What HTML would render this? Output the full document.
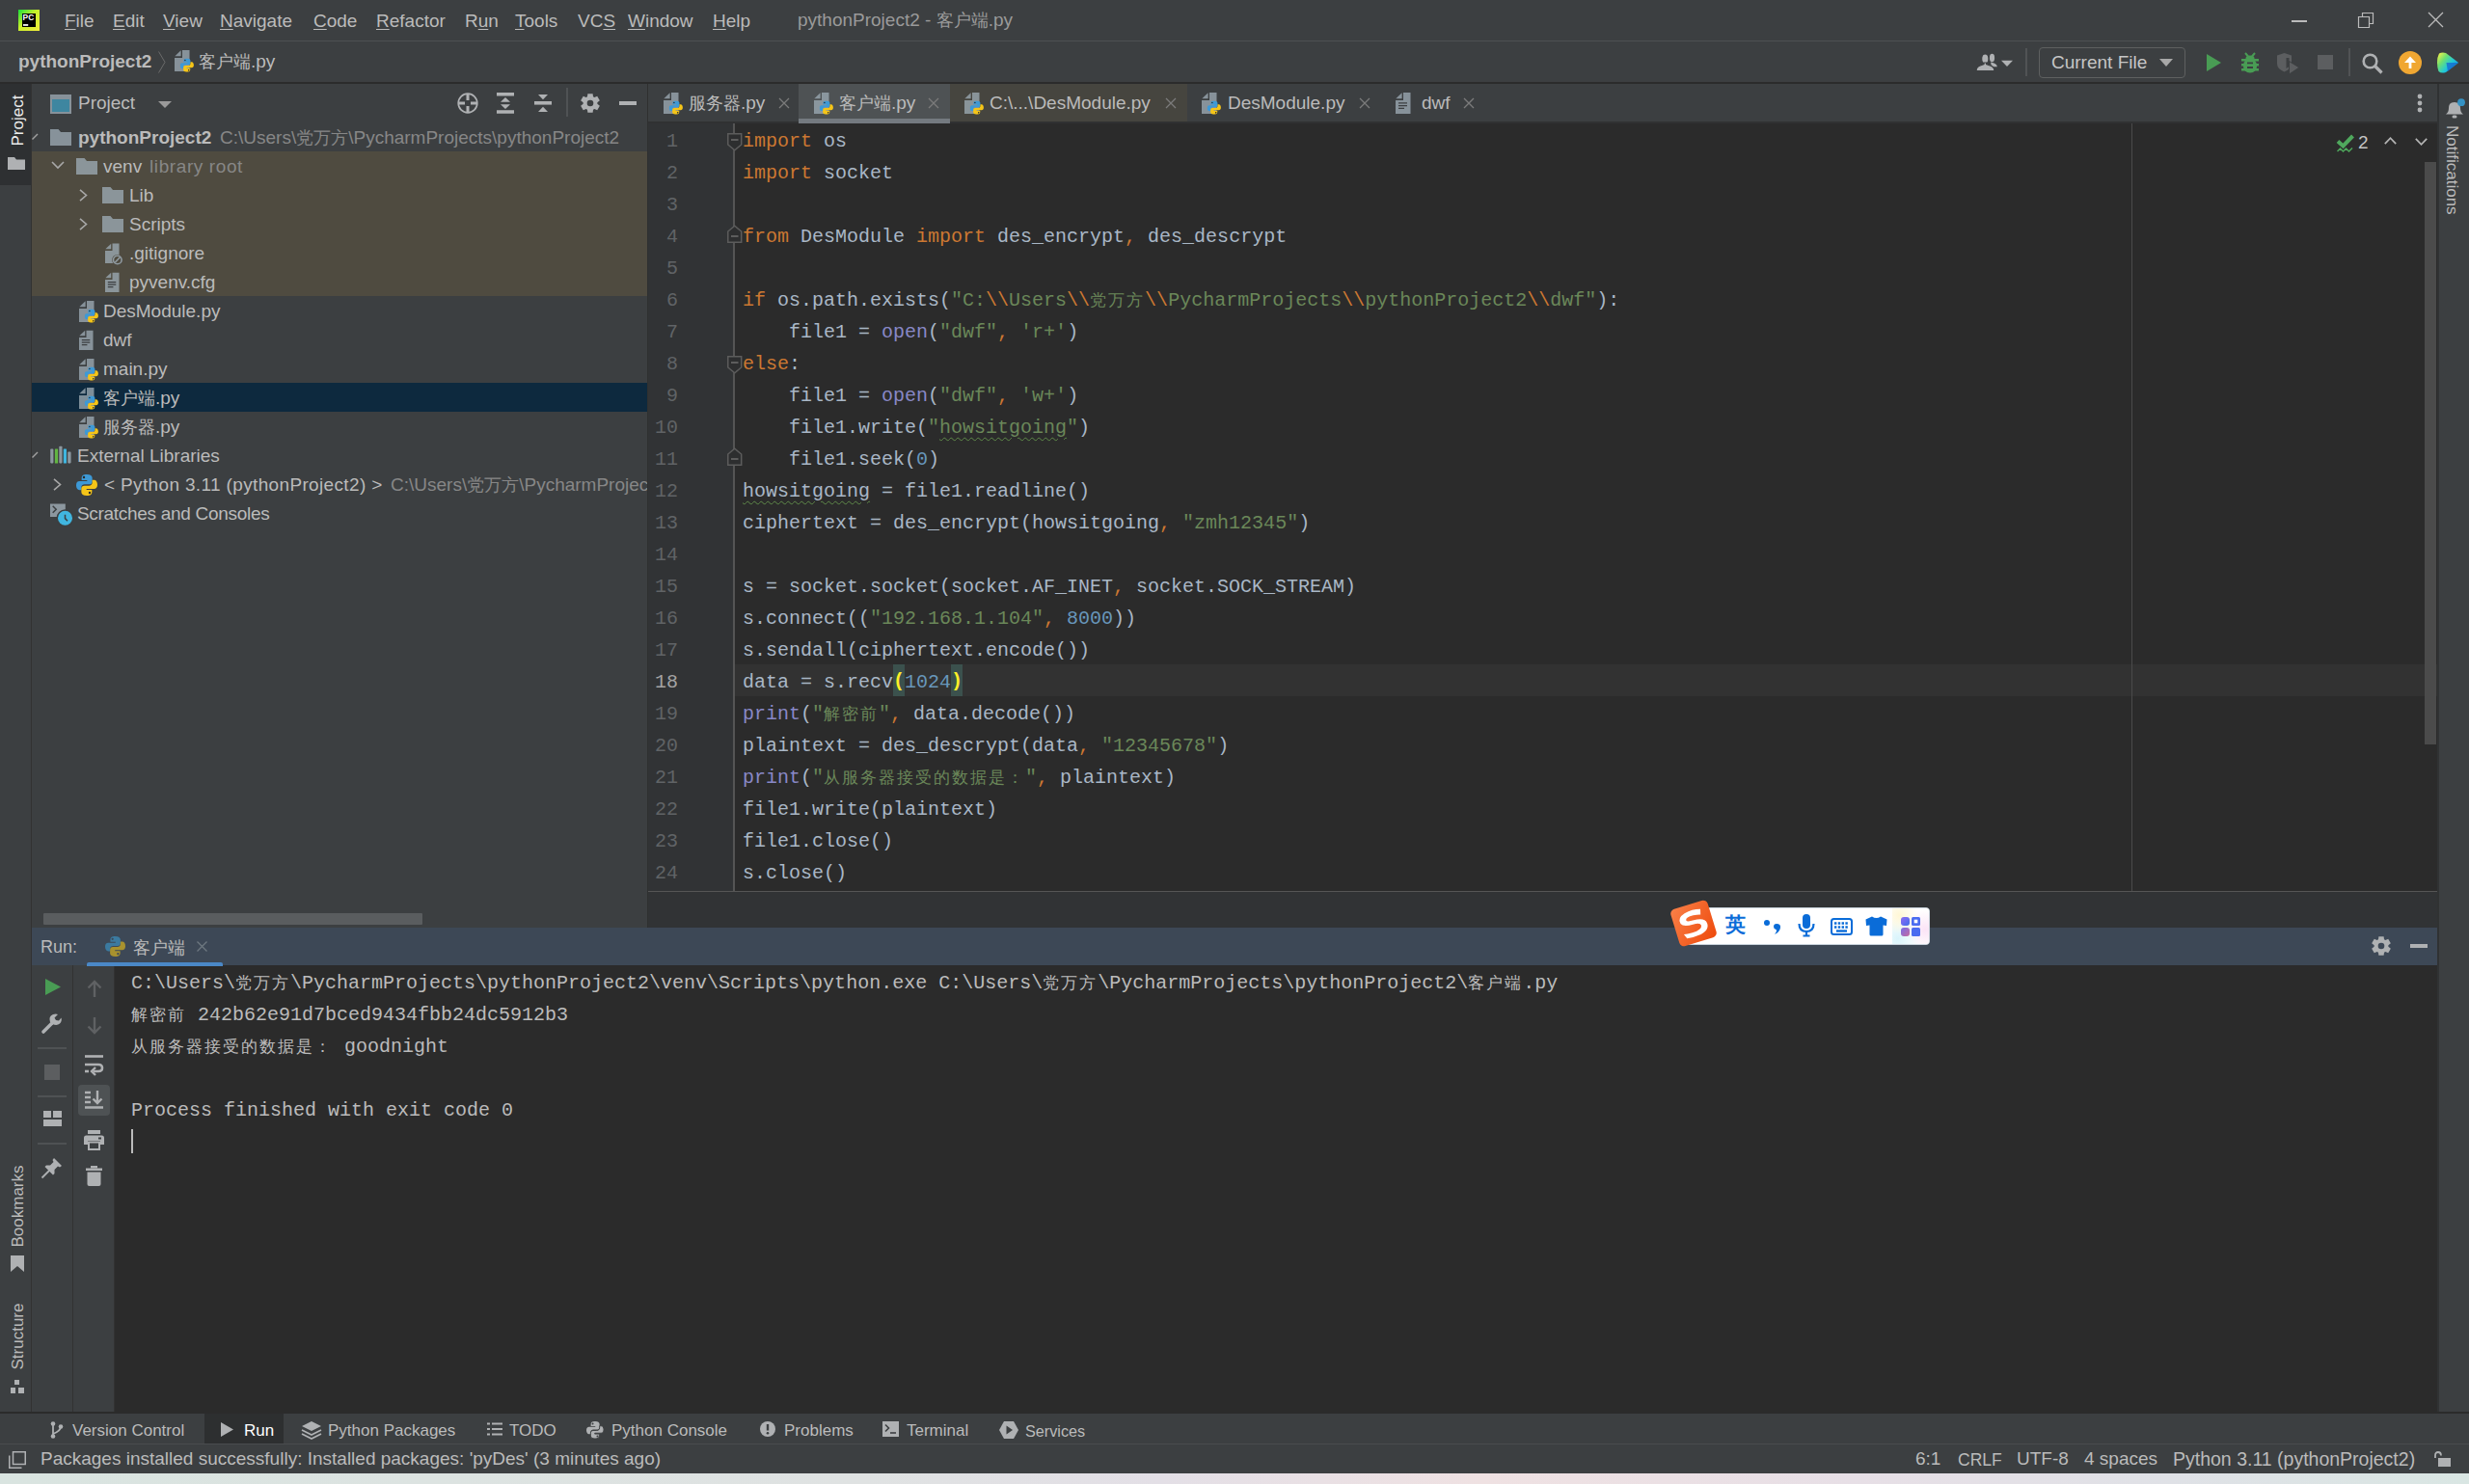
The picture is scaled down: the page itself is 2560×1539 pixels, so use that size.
<!DOCTYPE html>
<html><head><meta charset="utf-8">
<style>
*{box-sizing:border-box;margin:0;padding:0}
html,body{width:2560px;height:1539px;overflow:hidden;background:#3c3f41}
body{position:relative;font-family:"Liberation Sans",sans-serif;font-size:19px;color:#bbbbbb}
.a{position:absolute}
.t{position:absolute;white-space:pre;line-height:22px;height:22px}
.m{font-family:"Liberation Mono",monospace;font-size:20px;white-space:pre}
.u{text-decoration:underline;text-underline-offset:2px;text-decoration-thickness:1px}
.cj{font-size:18px}
.cc{font-size:17px;letter-spacing:2px;line-height:0}
.cc2{font-size:17px;letter-spacing:2px;line-height:0}
.tx{position:absolute;width:12px;height:12px}
svg{position:absolute;overflow:visible}
/* code */
.code{position:absolute;left:770px;top:129.6px;line-height:33px;font-family:"Liberation Mono",monospace;font-size:20px;color:#a9b7c6;white-space:pre}
.k{color:#cc7832}.s{color:#6a8759}.n{color:#6897bb}.b{color:#8888c6}
.ln{position:absolute;left:672px;width:31px;top:129.6px;line-height:33px;font-family:"Liberation Mono",monospace;font-size:20px;color:#606366;text-align:right;white-space:pre}
.bm{background:#3b514d;color:#ffef28;font-weight:bold;padding:6.2px 0 3.2px}
.wv{text-decoration:underline wavy #5f8a49;text-decoration-thickness:1px;text-underline-offset:4px}
</style></head><body>

<svg width="0" height="0" style="position:absolute;left:0;top:0"><defs>
<symbol id="doc" viewBox="0 0 16 22"><path d="M8 0H15.5V22H0V8H8Z" fill="#9aa7b0" fill-opacity="0.8"/><path d="M0.3 6.3L6.6 0.3V6.3Z" fill="#9aa7b0" fill-opacity="0.8"/></symbol>
<symbol id="py" viewBox="0 0 14 14"><path d="M7 0C4.5 0 3.6 1 3.6 2.4V3.8H7.2V4.5H2.2C0.8 4.5 0 5.5 0 7.2C0 9 0.8 10.3 2.2 10.3H3.4V8.6C3.4 7.4 4.4 6.6 5.6 6.6H8.6C9.8 6.6 10.6 5.8 10.6 4.6V2.4C10.6 1 9.4 0 7 0Z" fill="#3d99d6"/><path d="M7 0C4.5 0 3.6 1 3.6 2.4V3.8H7.2V4.5H2.2C0.8 4.5 0 5.5 0 7.2C0 9 0.8 10.3 2.2 10.3H3.4V8.6C3.4 7.4 4.4 6.6 5.6 6.6H8.6C9.8 6.6 10.6 5.8 10.6 4.6V2.4C10.6 1 9.4 0 7 0Z" fill="#f5c518" transform="rotate(180 7 7)"/><circle cx="5.1" cy="1.9" r="0.75" fill="#2b2b2b"/><circle cx="8.9" cy="12.1" r="0.75" fill="#2b2b2b"/></symbol>
<symbol id="pym" viewBox="0 0 14 14"><path d="M7 0C4.5 0 3.6 1 3.6 2.4V3.8H7.2V4.5H2.2C0.8 4.5 0 5.5 0 7.2C0 9 0.8 10.3 2.2 10.3H3.4V8.6C3.4 7.4 4.4 6.6 5.6 6.6H8.6C9.8 6.6 10.6 5.8 10.6 4.6V2.4C10.6 1 9.4 0 7 0Z" fill="#3b7aa0"/><path d="M7 0C4.5 0 3.6 1 3.6 2.4V3.8H7.2V4.5H2.2C0.8 4.5 0 5.5 0 7.2C0 9 0.8 10.3 2.2 10.3H3.4V8.6C3.4 7.4 4.4 6.6 5.6 6.6H8.6C9.8 6.6 10.6 5.8 10.6 4.6V2.4C10.6 1 9.4 0 7 0Z" fill="#a8922e" transform="rotate(180 7 7)"/><circle cx="5.1" cy="1.9" r="0.75" fill="#3d4856"/><circle cx="8.9" cy="12.1" r="0.75" fill="#3d4856"/></symbol>
<symbol id="pyfile" viewBox="0 0 21 23"><use href="#doc" x="0" y="0" width="16" height="22"/><use href="#py" x="5.6" y="8.6" width="14.4" height="14.2"/></symbol>
<symbol id="folder" viewBox="0 0 22 17"><path d="M0 0H8.5L11 3H22V17H0Z" fill="#9aa7b0" fill-opacity="0.8"/></symbol>
<symbol id="txtfile" viewBox="0 0 16 22"><use href="#doc" width="16" height="22"/><path d="M3 10.8H12M3 13.6H12M3 16.3H9" stroke="#3c3f41" stroke-width="1.3"/></symbol>
<symbol id="pygrey" viewBox="0 0 14 14"><path d="M7 0C4.5 0 3.6 1 3.6 2.4V3.8H7.2V4.5H2.2C0.8 4.5 0 5.5 0 7.2C0 9 0.8 10.3 2.2 10.3H3.4V8.6C3.4 7.4 4.4 6.6 5.6 6.6H8.6C9.8 6.6 10.6 5.8 10.6 4.6V2.4C10.6 1 9.4 0 7 0Z" fill="#afb1b3"/><path d="M7 0C4.5 0 3.6 1 3.6 2.4V3.8H7.2V4.5H2.2C0.8 4.5 0 5.5 0 7.2C0 9 0.8 10.3 2.2 10.3H3.4V8.6C3.4 7.4 4.4 6.6 5.6 6.6H8.6C9.8 6.6 10.6 5.8 10.6 4.6V2.4C10.6 1 9.4 0 7 0Z" fill="#afb1b3" transform="rotate(180 7 7)" stroke="#3c3f41" stroke-width="0.7"/><circle cx="5.1" cy="1.9" r="0.75" fill="#3c3f41"/><circle cx="8.9" cy="12.1" r="0.75" fill="#3c3f41"/></symbol>
</defs></svg>
<!-- ===== TITLE BAR ===== -->
<div class="a" style="left:0;top:0;width:2560px;height:42px;background:#3c3f41"></div>
<div class="a" style="left:0;top:42px;width:2560px;height:1px;background:#4e5052"></div>
<!-- logo -->
<svg style="left:19px;top:10px" width="22" height="22" viewBox="0 0 22 22"><defs><linearGradient id="pcg" x1="0" y1="0" x2="1" y2="1"><stop offset="0" stop-color="#18e03a"/><stop offset="0.45" stop-color="#c8f02a"/><stop offset="1" stop-color="#f2ec3c"/></linearGradient></defs><rect x="0" y="0" width="22" height="22" fill="url(#pcg)"/><rect x="4" y="4" width="14" height="14" fill="#000"/><text x="4.6" y="11.2" font-family="Liberation Sans" font-weight="bold" font-size="8.4" fill="#fff">PC</text><rect x="5" y="15" width="5.2" height="1.9" fill="#e8e8e8"/></svg>

<div class="t" style="left:67px;top:11px"><span class="u">F</span>ile</div>
<div class="t" style="left:117px;top:11px"><span class="u">E</span>dit</div>
<div class="t" style="left:169px;top:11px"><span class="u">V</span>iew</div>
<div class="t" style="left:228px;top:11px"><span class="u">N</span>avigate</div>
<div class="t" style="left:325px;top:11px"><span class="u">C</span>ode</div>
<div class="t" style="left:390px;top:11px"><span class="u">R</span>efactor</div>
<div class="t" style="left:482px;top:11px">R<span class="u">u</span>n</div>
<div class="t" style="left:534px;top:11px"><span class="u">T</span>ools</div>
<div class="t" style="left:599px;top:11px">VC<span class="u">S</span></div>
<div class="t" style="left:651px;top:11px"><span class="u">W</span>indow</div>
<div class="t" style="left:739px;top:11px"><span class="u">H</span>elp</div>
<div class="t" style="left:827px;top:10px;color:#9a9a9a">pythonProject2 - <span class="cj">客户端</span>.py</div>

<!-- window controls -->
<div class="a" style="left:2376px;top:21px;width:16px;height:1.5px;background:#bbb"></div>
<svg style="left:2445px;top:13px" width="16" height="16" viewBox="0 0 16 16"><path d="M0.5 4.5h11v11h-11z M4.5 4.5v-4h11v11h-4" fill="none" stroke="#bbb" stroke-width="1.2"/></svg>
<svg style="left:2518px;top:13px" width="15" height="15" viewBox="0 0 15 15"><path d="M0 0L15 15M15 0L0 15" stroke="#bbb" stroke-width="1.3"/></svg>

<!-- ===== NAV BAR ===== -->
<div class="a" style="left:0;top:85px;width:2560px;height:2px;background:#2b2b2b"></div>
<div class="t" style="left:19px;top:53px;font-weight:bold;color:#bbbbbb">pythonProject2</div>
<svg style="left:164px;top:53px" width="8" height="23" viewBox="0 0 8 23"><path d="M0.5 0.5L7 11.5L0.5 22.5" fill="none" stroke="#6b6b6b" stroke-width="1"/></svg>
<svg style="left:181px;top:52px" width="21" height="23"><use href="#pyfile" width="21" height="23"/></svg>
<div class="t" style="left:206px;top:53px"><span class="cj">客户端</span>.py</div>


<svg style="left:2048px;top:54px" width="40" height="22" viewBox="0 0 40 22"><ellipse cx="17.5" cy="6" rx="2.6" ry="4.2" fill="#afb1b3"/><path d="M16 10.5Q22.5 11.5 22.8 15.2H17Z" fill="#afb1b3"/><ellipse cx="10.3" cy="7" rx="3.7" ry="5.1" fill="#afb1b3" stroke="#3c3f41" stroke-width="1.3"/><path d="M1 19.5Q1.3 14.5 6 13.6L9 12.5V11H11.6V12.5L14.6 13.6Q19.6 14.5 20 19.5Z" fill="#afb1b3" stroke="#3c3f41" stroke-width="1.2"/><path d="M27 8.8H39L33 15Z" fill="#afb1b3"/></svg>
<div class="a" style="left:2100px;top:50px;width:2px;height:29px;background:#515355"></div>
<div class="a" style="left:2114px;top:49px;width:152px;height:32px;border:1.5px solid #5e6060;border-radius:4px"></div>
<div class="t" style="left:2127px;top:54px;color:#c6c6c6">Current File</div>
<svg style="left:2239px;top:61px" width="14" height="8" viewBox="0 0 14 8"><path d="M0 0H14L7 8Z" fill="#a8a8a8"/></svg>
<svg style="left:2288px;top:56px" width="15" height="18" viewBox="0 0 15 18"><path d="M0 0L15 9L0 18Z" fill="#499c54"/></svg>
<svg style="left:2324px;top:54px" width="18" height="22" viewBox="0 0 18 22"><path d="M4 1L7 4.5M14 1L11 4.5" stroke="#499c54" stroke-width="2"/><ellipse cx="9" cy="6.5" rx="4.5" ry="3" fill="#499c54"/><rect x="2" y="7" width="14" height="14.5" rx="6.5" fill="#499c54"/><path d="M0 8.3H18M0 13.3H18M0 18.3H18" stroke="#499c54" stroke-width="2.4"/><path d="M6 11.3H12M6 16H12" stroke="#3c3f41" stroke-width="1.8"/></svg>
<svg style="left:2361px;top:55px" width="24" height="23" viewBox="0 0 24 23"><path d="M0 2.5L7.5 0L15 2.5V11Q15 16.5 7.5 19.5Q0 16.5 0 11Z" fill="#5c5e60"/><path d="M9.5 5H12.5V14L9.5 16Z" fill="#3c3f41"/><path d="M12.5 8.5L23 15L12.5 22Z" fill="#5c5e60" stroke="#3c3f41" stroke-width="1"/></svg>
<div class="a" style="left:2403px;top:57px;width:16px;height:15px;background:#5c5e60"></div>
<div class="a" style="left:2435px;top:50px;width:2px;height:29px;background:#515355"></div>
<svg style="left:2449px;top:55px" width="22" height="22" viewBox="0 0 22 22"><circle cx="8.5" cy="8.5" r="6.8" fill="none" stroke="#afb1b3" stroke-width="2.6"/><path d="M13.5 13.5L20.5 20.5" stroke="#afb1b3" stroke-width="3.2"/></svg>
<svg style="left:2487px;top:53px" width="24" height="24" viewBox="0 0 24 24"><circle cx="12" cy="12" r="12" fill="#f0a732"/><path d="M12 5.5L18 12H6Z" fill="#fff"/><rect x="10.6" y="11" width="2.8" height="7" fill="#fff"/></svg>
<svg style="left:2527px;top:54px" width="22" height="22" viewBox="0 0 22 22"><defs><linearGradient id="jg" x1="0" y1="0.1" x2="1" y2="0.9"><stop offset="0" stop-color="#f4f24a"/><stop offset="0.3" stop-color="#6ee070"/><stop offset="0.6" stop-color="#21c8d8"/><stop offset="1" stop-color="#0a84e8"/></linearGradient></defs><path d="M2 1.5Q5 0 9 1L21.5 10.5Q22 11 21.5 11.5L9 21Q4 22.5 1.5 20Q0 16 0 11Q0 5 2 1.5Z" fill="url(#jg)"/><path d="M9.5 11H21.6L11 20Z" fill="#1565d0" opacity="0.75"/></svg>


<!-- ===== LEFT STRIPE ===== -->
<div class="a" style="left:0;top:87px;width:32px;height:1377px;background:#3c3f41"></div>
<div class="a" style="left:32px;top:87px;width:1px;height:1377px;background:#323232"></div>
<div class="a" style="left:0;top:87px;width:32px;height:105px;background:#2e3032"></div>


<div class="t" style="left:-11px;top:114px;width:60px;font-size:17px;color:#ececec;transform:rotate(-90deg);transform-origin:30px 11px;text-align:center">Project</div>
<svg style="left:8px;top:163px" width="18" height="13" viewBox="0 0 18 13"><path d="M0 0H7L9 2.5H18V13H0Z" fill="#afb1b3"/></svg>
<div class="t" style="left:-26px;top:1240px;width:90px;font-size:17px;transform:rotate(-90deg);transform-origin:45px 11px;text-align:center">Bookmarks</div>
<svg style="left:11px;top:1302px" width="14" height="17" viewBox="0 0 14 17"><path d="M0 0H14V17L7 11L0 17Z" fill="#afb1b3"/></svg>
<div class="t" style="left:-26px;top:1375px;width:90px;font-size:17px;transform:rotate(-90deg);transform-origin:45px 11px;text-align:center">Structure</div>
<svg style="left:11px;top:1431px" width="14" height="14" viewBox="0 0 14 14"><rect x="4" y="0" width="5" height="5" fill="#afb1b3"/><rect x="0" y="8" width="5" height="6" fill="#afb1b3"/><rect x="8" y="8" width="6" height="6" fill="#afb1b3"/></svg>

<!-- ===== PROJECT PANEL ===== -->
<div class="a" style="left:33px;top:87px;width:638px;height:875px;background:#3c3f41"></div>
<div class="a" style="left:671px;top:87px;width:1px;height:875px;background:#2f3030"></div>
<!-- tree -->
<div class="a" style="left:33px;top:157px;width:638px;height:150px;background:#4f4b40"></div>
<div class="a" style="left:33px;top:397px;width:638px;height:30px;background:#0d293e"></div>
<div class="t" style="left:81px;top:96px">Project</div>
<svg style="left:52px;top:98px" width="22" height="20" viewBox="0 0 22 20"><rect x="0" y="0" width="22" height="20" fill="#9aa7b0" fill-opacity="0.8"/><rect x="2" y="5" width="18" height="13" fill="#3e86a0"/></svg>
<svg style="left:164px;top:105px" width="14" height="7" viewBox="0 0 14 7"><path d="M0 0H14L7 7Z" fill="#9a9a9a"/></svg>
<!-- header icons -->

<svg style="left:474px;top:96px" width="22" height="22" viewBox="0 0 22 22"><circle cx="11" cy="11" r="9.8" fill="none" stroke="#afb1b3" stroke-width="1.7"/><path d="M11 1V8M11 14V21M1 11H8M14 11H21" stroke="#afb1b3" stroke-width="3"/></svg>
<svg style="left:515px;top:96px" width="18" height="22" viewBox="0 0 18 22"><path d="M0 1.7H18M0 20H18" stroke="#afb1b3" stroke-width="3.4"/><path d="M9 5L14 9.7H4Z M9 17L14 12.3H4Z" fill="#afb1b3"/></svg>
<svg style="left:554px;top:98px" width="18" height="18" viewBox="0 0 18 18"><path d="M0 8.8H18" stroke="#afb1b3" stroke-width="3.6"/><path d="M9 5.2L14 0H4Z M9 12.8L14 18H4Z" fill="#afb1b3"/></svg>
<div class="a" style="left:587px;top:91px;width:2px;height:30px;background:#4f5254"></div>
<svg style="left:602px;top:97px" width="20" height="20" viewBox="0 0 20 20"><path d="M6.98 3.24 L7.38 0.14 L12.62 0.14 L13.02 3.24 L14.34 4.01 L17.23 2.80 L19.85 7.34 L17.36 9.23 L17.36 10.77 L19.85 12.66 L17.23 17.20 L14.34 15.99 L13.02 16.76 L12.62 19.86 L7.38 19.86 L6.98 16.76 L5.66 15.99 L2.77 17.20 L0.15 12.66 L2.64 10.77 L2.64 9.23 L0.15 7.34 L2.77 2.80 L5.66 4.01Z" fill="#afb1b3"/><circle cx="10" cy="10" r="3.3" fill="#3c3f41"/></svg>
<div class="a" style="left:642px;top:105px;width:18px;height:4px;background:#afb1b3"></div>


<svg style="left:33px;top:137px" width="6" height="8" viewBox="0 0 6 8"><path d="M0.5 7.5L6 2" stroke="#a0a0a0" stroke-width="1.5"/></svg>
<svg style="left:52px;top:134px" width="22" height="17"><use href="#folder" width="22" height="17"/></svg>
<div class="t" style="left:81px;top:132px;font-weight:bold">pythonProject2</div>
<div class="t" style="left:228px;top:132px;color:#878787">C:\Users\<span class="cj">党万方</span>\PycharmProjects\pythonProject2</div>

<svg style="left:53px;top:167px" width="14" height="8" viewBox="0 0 14 8"><path d="M1 1L7 7L13 1" fill="none" stroke="#a8a8a8" stroke-width="1.6"/></svg>
<svg style="left:79px;top:164px" width="22" height="17"><use href="#folder" width="22" height="17"/></svg>
<div class="t" style="left:107px;top:162px">venv</div>
<div class="t" style="left:155px;top:162px;color:#878787;letter-spacing:0.6px">library root</div>

<svg style="left:82px;top:196px" width="9" height="13" viewBox="0 0 9 13"><path d="M1 0.8L7.5 6.5L1 12.2" fill="none" stroke="#a8a8a8" stroke-width="1.6"/></svg>
<svg style="left:106px;top:194px" width="22" height="17"><use href="#folder" width="22" height="17"/></svg>
<div class="t" style="left:134px;top:192px">Lib</div>

<svg style="left:82px;top:226px" width="9" height="13" viewBox="0 0 9 13"><path d="M1 0.8L7.5 6.5L1 12.2" fill="none" stroke="#a8a8a8" stroke-width="1.6"/></svg>
<svg style="left:106px;top:224px" width="22" height="17"><use href="#folder" width="22" height="17"/></svg>
<div class="t" style="left:134px;top:222px">Scripts</div>

<svg style="left:109px;top:252px" width="20" height="23" viewBox="0 0 20 23"><use href="#doc" width="15" height="21.5"/><circle cx="12.8" cy="17.5" r="5.6" fill="#4f4b40"/><circle cx="12.8" cy="17.5" r="4.3" fill="none" stroke="#9aa7b0" stroke-opacity="0.85" stroke-width="1.6"/><path d="M10.2 20.2L15.4 14.8" stroke="#9aa7b0" stroke-opacity="0.85" stroke-width="1.6"/></svg>
<div class="t" style="left:134px;top:252px">.gitignore</div>

<svg style="left:109px;top:282px" width="15" height="21.5"><use href="#txtfile" width="15" height="21.5"/></svg>
<div class="t" style="left:134px;top:282px">pyvenv.cfg</div>

<svg style="left:82px;top:312px" width="21" height="23"><use href="#pyfile" width="21" height="23"/></svg>
<div class="t" style="left:107px;top:312px">DesModule.py</div>

<svg style="left:82px;top:342px" width="15" height="21.5"><use href="#txtfile" width="15" height="21.5"/></svg>
<div class="t" style="left:107px;top:342px">dwf</div>

<svg style="left:82px;top:372px" width="21" height="23"><use href="#pyfile" width="21" height="23"/></svg>
<div class="t" style="left:107px;top:372px">main.py</div>

<svg style="left:82px;top:402px" width="21" height="23"><use href="#pyfile" width="21" height="23"/></svg>
<div class="t" style="left:107px;top:402px"><span class="cj">客户端</span>.py</div>

<svg style="left:82px;top:432px" width="21" height="23"><use href="#pyfile" width="21" height="23"/></svg>
<div class="t" style="left:107px;top:432px"><span class="cj">服务器</span>.py</div>

<svg style="left:33px;top:467px" width="6" height="8" viewBox="0 0 6 8"><path d="M0.5 7.5L6 2" stroke="#a0a0a0" stroke-width="1.5"/></svg>
<svg style="left:52px;top:462px" width="22" height="19" viewBox="0 0 22 19"><rect x="0.2" y="3.6" width="3.2" height="14.8" rx="0.8" fill="#9aa7b0" fill-opacity="0.85"/><rect x="4.9" y="3.6" width="3.2" height="14.8" rx="0.5" fill="#62b543"/><rect x="9.3" y="0.7" width="3.2" height="17.7" rx="0.8" fill="#9aa7b0" fill-opacity="0.85"/><rect x="13.8" y="3.6" width="3.2" height="14.8" rx="0.5" fill="#40b6e0"/><rect x="18.2" y="6.6" width="3.4" height="11.8" rx="0.8" fill="#9aa7b0" fill-opacity="0.85"/></svg>
<div class="t" style="left:80px;top:462px">External Libraries</div>

<svg style="left:55px;top:496px" width="9" height="13" viewBox="0 0 9 13"><path d="M1 0.8L7.5 6.5L1 12.2" fill="none" stroke="#a8a8a8" stroke-width="1.6"/></svg>
<svg style="left:79px;top:492px" width="22" height="22"><use href="#py" width="22" height="22"/></svg>
<div class="t" style="left:108px;top:492px;letter-spacing:0.35px">&lt; Python 3.11 (pythonProject2) &gt;</div>
<div class="a" style="left:400px;top:487px;width:271px;height:30px;overflow:hidden"><div class="t" style="left:5px;top:5px;color:#878787">C:\Users\<span class="cj">党万方</span>\PycharmProjects\pythonProject2</div></div>

<svg style="left:52px;top:522px" width="25" height="25" viewBox="0 0 25 25"><rect x="0" y="0.5" width="15.8" height="13.5" fill="#9aa7b0" fill-opacity="0.85"/><path d="M2.7 2.8L6.2 6.3L2.7 9.8" fill="none" stroke="#3c3f41" stroke-width="1.5"/><circle cx="15.5" cy="15.3" r="9" fill="#3c3f41"/><circle cx="15.5" cy="15.3" r="7.5" fill="#40b6e0"/><path d="M15.5 11.7V15.6L18 18.2" fill="none" stroke="#3c3f41" stroke-width="1.5"/></svg>
<div class="t" style="left:80px;top:522px;letter-spacing:-0.3px">Scratches and Consoles</div>
<!-- project h-scrollbar -->
<div class="a" style="left:45px;top:947px;width:393px;height:12px;background:#5a5d5f;border-radius:1px"></div>


<!-- ===== EDITOR TABS ===== -->
<div class="a" style="left:672px;top:87px;width:1855px;height:41px;background:#3c3f41"></div>


<!-- tabs -->
<div class="a" style="left:672px;top:126px;width:1855px;height:2px;background:#303132"></div>
<div class="a" style="left:828px;top:87px;width:157px;height:41px;background:#4e5254"></div>
<div class="a" style="left:828px;top:123px;width:157px;height:5px;background:#747a80"></div>
<div class="a" style="left:985px;top:87px;width:246px;height:39px;background:#46453f"></div>
<svg style="left:688px;top:96px" width="21" height="23"><use href="#pyfile" width="21" height="23"/></svg>
<div class="t" style="left:714px;top:96px"><span class="cj">服务器</span>.py</div>
<svg class="tx" style="left:807px;top:101px" width="12" height="12" viewBox="0 0 12 12"><path d="M1 1L11 11M11 1L1 11" stroke="#7b7b7b" stroke-width="1.3"/></svg>
<svg style="left:844px;top:96px" width="21" height="23"><use href="#pyfile" width="21" height="23"/></svg>
<div class="t" style="left:870px;top:96px"><span class="cj">客户端</span>.py</div>
<svg class="tx" style="left:962px;top:101px" width="12" height="12" viewBox="0 0 12 12"><path d="M1 1L11 11M11 1L1 11" stroke="#7b7b7b" stroke-width="1.3"/></svg>
<svg style="left:1000px;top:96px" width="21" height="23"><use href="#pyfile" width="21" height="23"/></svg>
<div class="t" style="left:1026px;top:96px">C:\...\DesModule.py</div>
<svg class="tx" style="left:1208px;top:101px" width="12" height="12" viewBox="0 0 12 12"><path d="M1 1L11 11M11 1L1 11" stroke="#7b7b7b" stroke-width="1.3"/></svg>
<svg style="left:1246px;top:96px" width="21" height="23"><use href="#pyfile" width="21" height="23"/></svg>
<div class="t" style="left:1273px;top:96px">DesModule.py</div>
<svg class="tx" style="left:1409px;top:101px" width="12" height="12" viewBox="0 0 12 12"><path d="M1 1L11 11M11 1L1 11" stroke="#7b7b7b" stroke-width="1.3"/></svg>
<svg style="left:1447px;top:96px" width="16" height="22"><use href="#txtfile" width="16" height="22"/></svg>
<div class="t" style="left:1474px;top:96px">dwf</div>
<svg class="tx" style="left:1517px;top:101px" width="12" height="12" viewBox="0 0 12 12"><path d="M1 1L11 11M11 1L1 11" stroke="#7b7b7b" stroke-width="1.3"/></svg>
<svg style="left:2506px;top:97px" width="6" height="20" viewBox="0 0 6 20"><circle cx="3" cy="3" r="2.4" fill="#afb1b3"/><circle cx="3" cy="10" r="2.4" fill="#afb1b3"/><circle cx="3" cy="17" r="2.4" fill="#afb1b3"/></svg>
<!-- ===== EDITOR ===== -->
<div class="a" style="left:672px;top:128px;width:90px;height:834px;background:#313335"></div>
<div class="a" style="left:762px;top:128px;width:1765px;height:796px;background:#2b2b2b"></div>
<div class="a" style="left:762px;top:925px;width:1765px;height:37px;background:#313335"></div>
<div class="a" style="left:672px;top:924px;width:1855px;height:1px;background:#555555"></div>
<div class="a" style="left:760px;top:128px;width:2px;height:796px;background:#555555"></div>
<!-- current line -->
<div class="a" style="left:762px;top:689px;width:1765px;height:33px;background:#323232"></div>
<div class="a" style="left:2210px;top:128px;width:1px;height:796px;background:#4a4a4a"></div>
<div class="ln">1
2
3
4
5
6
7
8
9
10
11
12
13
14
15
16
17
<span style="color:#a4a3a3">18</span>
19
20
21
22
23
24</div>
<svg style="left:754px;top:138px" width="16" height="19" viewBox="0 0 16 19"><path d="M0.8 0.8H14.7V12L7.75 17.8L0.8 12Z" fill="#2d2e2f" stroke="#5c5c5c" stroke-width="1.5"/><path d="M4 7H11.5" stroke="#6a6a6a" stroke-width="1.6"/></svg><svg style="left:754px;top:233px" width="16" height="19" viewBox="0 0 16 19"><path d="M0.8 18.2H14.7V7L7.75 1.2L0.8 7Z" fill="#2d2e2f" stroke="#5c5c5c" stroke-width="1.5"/><path d="M4 12H11.5" stroke="#6a6a6a" stroke-width="1.6"/></svg><svg style="left:754px;top:369px" width="16" height="19" viewBox="0 0 16 19"><path d="M0.8 0.8H14.7V12L7.75 17.8L0.8 12Z" fill="#2d2e2f" stroke="#5c5c5c" stroke-width="1.5"/><path d="M4 7H11.5" stroke="#6a6a6a" stroke-width="1.6"/></svg><svg style="left:754px;top:464px" width="16" height="19" viewBox="0 0 16 19"><path d="M0.8 18.2H14.7V7L7.75 1.2L0.8 7Z" fill="#2d2e2f" stroke="#5c5c5c" stroke-width="1.5"/><path d="M4 12H11.5" stroke="#6a6a6a" stroke-width="1.6"/></svg>
<svg style="left:2423px;top:139px" width="18" height="19" viewBox="0 0 18 19"><path d="M1 7.5L6.5 12.5L16.5 2" fill="none" stroke="#4fa85d" stroke-width="4"/><path d="M0.5 18L3.5 15L6.5 18L9.5 15L12.5 18L16 14.5" fill="none" stroke="#4fa85d" stroke-width="1.5"/></svg>
<div class="t" style="left:2445px;top:137px;color:#c4c4c4">2</div>
<svg style="left:2472px;top:142px" width="13" height="8" viewBox="0 0 13 8"><path d="M0.8 7.2L6.5 1.2L12.2 7.2" fill="none" stroke="#b4b4b4" stroke-width="1.7"/></svg>
<svg style="left:2504px;top:143px" width="13" height="8" viewBox="0 0 13 8"><path d="M0.8 0.8L6.5 6.8L12.2 0.8" fill="none" stroke="#b4b4b4" stroke-width="1.7"/></svg>
<div class="a" style="left:2514px;top:168px;width:12px;height:604px;background:#4b4b4b"></div>
<div class="code"><span class="k">import</span> os
<span class="k">import</span> socket

<span class="k">from</span> DesModule <span class="k">import</span> des_encrypt<span class="k">,</span> des_descrypt

<span class="k">if</span> os.path.exists(<span class="s">"C:<span class="k">\\</span>Users<span class="k">\\</span><span class="cc">党万方</span><span class="k">\\</span>PycharmProjects<span class="k">\\</span>pythonProject2<span class="k">\\</span>dwf"</span>):
    file1 = <span class="b">open</span>(<span class="s">"dwf"</span><span class="k">,</span> <span class="s">'r+'</span>)
<span class="k">else</span>:
    file1 = <span class="b">open</span>(<span class="s">"dwf"</span><span class="k">,</span> <span class="s">'w+'</span>)
    file1.write(<span class="s">"<span class="wv">howsitgoing</span>"</span>)
    file1.seek(<span class="n">0</span>)
<span class="wv">howsitgoing</span> = file1.readline()
ciphertext = des_encrypt(howsitgoing<span class="k">,</span> <span class="s">"zmh12345"</span>)

s = socket.socket(socket.AF_INET<span class="k">,</span> socket.SOCK_STREAM)
s.connect((<span class="s">"192.168.1.104"</span><span class="k">,</span> <span class="n">8000</span>))
s.sendall(ciphertext.encode())
data = s.recv<span class="bm">(</span><span class="n">1024</span><span class="bm">)</span>
<span class="b">print</span>(<span class="s">"<span class="cc">解密前</span>"</span><span class="k">,</span> data.decode())
plaintext = des_descrypt(data<span class="k">,</span> <span class="s">"12345678"</span>)
<span class="b">print</span>(<span class="s">"<span class="cc">从服务器接受的数据是：</span>"</span><span class="k">,</span> plaintext)
file1.write(plaintext)
file1.close()
s.close()</div>


<!-- ===== RIGHT STRIPE ===== -->
<div class="a" style="left:2527px;top:87px;width:2px;height:1377px;background:#303233"></div>
<div class="a" style="left:2529px;top:87px;width:31px;height:1377px;background:#3c3f41"></div>

<!-- ===== RUN PANEL ===== -->
<div class="a" style="left:33px;top:962px;width:2494px;height:39px;background:#3d4856"></div>
<div class="a" style="left:33px;top:1001px;width:42px;height:463px;background:#3c3f41"></div>
<div class="a" style="left:75px;top:1001px;width:1px;height:463px;background:#323232"></div>
<div class="a" style="left:76px;top:1001px;width:42px;height:463px;background:#3c3f41"></div>
<div class="a" style="left:118px;top:1001px;width:1px;height:463px;background:#323232"></div>
<div class="a" style="left:119px;top:1001px;width:2408px;height:463px;background:#2b2b2b"></div>


<!-- run header -->
<div class="t" style="left:42px;top:971px;font-size:18px">Run:</div>
<svg style="left:109px;top:971px" width="21" height="21"><use href="#pym" width="21" height="21"/></svg>
<div class="t" style="left:138px;top:972px"><span class="cj">客户端</span></div>
<svg style="left:204px;top:976px" width="11" height="11" viewBox="0 0 11 11"><path d="M0.5 0.5L10.5 10.5M10.5 0.5L0.5 10.5" stroke="#6e7880" stroke-width="1.3"/></svg>
<div class="a" style="left:90px;top:998px;width:141px;height:4px;background:#4a88c7;border-radius:2px 2px 0 0"></div>
<svg style="left:2459px;top:971px" width="20" height="20" viewBox="0 0 20 20"><path d="M6.98 3.24 L7.38 0.14 L12.62 0.14 L13.02 3.24 L14.34 4.01 L17.23 2.80 L19.85 7.34 L17.36 9.23 L17.36 10.77 L19.85 12.66 L17.23 17.20 L14.34 15.99 L13.02 16.76 L12.62 19.86 L7.38 19.86 L6.98 16.76 L5.66 15.99 L2.77 17.20 L0.15 12.66 L2.64 10.77 L2.64 9.23 L0.15 7.34 L2.77 2.80 L5.66 4.01Z" fill="#afb1b3"/><circle cx="10" cy="10" r="3.3" fill="#3d4856"/></svg>
<div class="a" style="left:2499px;top:979px;width:18px;height:4px;background:#afb1b3"></div>

<!-- run toolbar col1 -->
<svg style="left:47px;top:1015px" width="16" height="17" viewBox="0 0 16 17"><path d="M0 0L16 8.5L0 17Z" fill="#499c54"/></svg>
<svg style="left:43px;top:1051px" width="21" height="21" viewBox="0 0 21 21"><path d="M2 19L11 10" stroke="#afb1b3" stroke-width="3.6" stroke-linecap="round"/><path d="M9 9Q7 3 12 1Q15 0 17 1L13.5 4.5L15 7L18 7.5L20.5 4.5Q21.5 8 19 10.5Q16 13 11.5 11Z" fill="#afb1b3"/></svg>
<div class="a" style="left:39px;top:1086px;width:30px;height:2px;background:#4f5254"></div>
<div class="a" style="left:46px;top:1104px;width:16px;height:16px;background:#5c5e60"></div>
<div class="a" style="left:39px;top:1136px;width:30px;height:2px;background:#4f5254"></div>
<svg style="left:45px;top:1152px" width="19" height="16" viewBox="0 0 19 16"><rect x="0" y="0" width="8" height="7" fill="#afb1b3"/><rect x="10" y="0" width="9" height="7" fill="#afb1b3"/><rect x="0" y="9" width="19" height="7" fill="#afb1b3"/></svg>
<div class="a" style="left:39px;top:1185px;width:30px;height:2px;background:#4f5254"></div>
<svg style="left:43px;top:1200px" width="22" height="22" viewBox="0 0 22 22"><path d="M0.5 21.5L8.5 13.5" stroke="#afb1b3" stroke-width="1.8"/><path d="M13 1L21 9L19 10.5L17 9.5L13.5 13L13.5 17L12 18.5L3.5 10L5 8.5L9 8.5L12.5 5L11.5 3Z" fill="#afb1b3"/></svg>

<!-- run toolbar col2 -->
<svg style="left:90px;top:1016px" width="16" height="18" viewBox="0 0 16 18"><path d="M8 2V18M1.5 8.5L8 2L14.5 8.5" fill="none" stroke="#5f6163" stroke-width="2.4"/></svg>
<svg style="left:90px;top:1055px" width="16" height="18" viewBox="0 0 16 18"><path d="M8 0V16M1.5 9.5L8 16L14.5 9.5" fill="none" stroke="#5f6163" stroke-width="2.4"/></svg>
<svg style="left:88px;top:1094px" width="20" height="20" viewBox="0 0 20 20"><path d="M0 1.5H19" stroke="#afb1b3" stroke-width="2.6"/><path d="M0 10H14Q18 10 18 13.5Q18 17 14 17H9" fill="none" stroke="#afb1b3" stroke-width="2.6"/><path d="M11 13L7 17L11 21" fill="none" stroke="#afb1b3" stroke-width="2.4"/><path d="M0 17H4" stroke="#afb1b3" stroke-width="2.6"/></svg>
<div class="a" style="left:81px;top:1125px;width:33px;height:32px;background:#4e5254;border-radius:4px"></div>
<svg style="left:88px;top:1131px" width="20" height="19" viewBox="0 0 20 19"><path d="M0 17.5H19M0 2H6M0 7H6M0 12H6" stroke="#afb1b3" stroke-width="2.4"/><path d="M13 0V13M8.5 8.5L13 13L17.5 8.5" fill="none" stroke="#afb1b3" stroke-width="2.4"/></svg>
<svg style="left:87px;top:1172px" width="21" height="21" viewBox="0 0 21 21"><rect x="4" y="0" width="13" height="4" fill="#afb1b3"/><path d="M0 8Q0 5.5 2.5 5.5H18.5Q21 5.5 21 8V15H17V11H4V15H0Z" fill="#afb1b3"/><path d="M5 12.5H16V20H5Z" fill="none" stroke="#afb1b3" stroke-width="2"/><rect x="15" y="7.5" width="3" height="2" fill="#3c3f41"/></svg>
<svg style="left:89px;top:1209px" width="17" height="21" viewBox="0 0 17 21"><rect x="5" y="0" width="7" height="2.5" fill="#afb1b3"/><rect x="0" y="2.5" width="17" height="2.5" fill="#afb1b3"/><path d="M1.5 6.5H15.5V19Q15.5 21 13.5 21H3.5Q1.5 21 1.5 19Z" fill="#afb1b3"/></svg>

<!-- console -->
<div class="a m" style="left:136px;top:1003.4px;line-height:33px;color:#bbbbbb">C:\Users\<span class="cc2">党万方</span>\PycharmProjects\pythonProject2\venv\Scripts\python.exe C:\Users\<span class="cc2">党万方</span>\PycharmProjects\pythonProject2\<span class="cc2">客户端</span>.py
<span class="cc2">解密前</span> 242b62e91d7bced9434fbb24dc5912b3
<span class="cc2">从服务器接受的数据是：</span> goodnight

Process finished with exit code 0</div>
<div class="a" style="left:136px;top:1171px;width:2px;height:25px;background:#bbbbbb"></div>
<!-- ===== BOTTOM ===== -->
<div class="a" style="left:0;top:1464px;width:2560px;height:2px;background:#2b2b2b"></div>
<div class="a" style="left:0;top:1466px;width:2560px;height:31px;background:#3c3f41"></div>
<div class="a" style="left:0;top:1497px;width:2560px;height:1px;background:#4a4c4e"></div>
<div class="a" style="left:0;top:1498px;width:2560px;height:30px;background:#3c3f41"></div>
<div class="a" style="left:0;top:1528px;width:2560px;height:11px;background:linear-gradient(90deg,#d9e4e0 0%,#dfe2e2 35%,#e3dfe6 47%,#efe1e2 60%,#e7dfe6 75%,#dfe1e6 88%,#d9e6e3 100%)"></div>

<div class="t" style="left:2497px;top:164px;width:90px;font-size:17px;transform:rotate(90deg);transform-origin:45px 11px;text-align:center">Notifications</div>
<svg style="left:2536px;top:102px" width="20" height="22" viewBox="0 0 20 22"><path d="M0 16.5Q3 14.5 3 10Q3 4 9 4Q15 4 15 10Q15 14.5 18 16.5Z" fill="#afb1b3"/><rect x="6.5" y="17.5" width="5" height="3" rx="1.5" fill="#afb1b3"/><circle cx="16" cy="4.2" r="3.9" fill="#3592c4"/></svg>

<div class="a" style="left:212px;top:1466px;width:82px;height:31px;background:#2d2f30"></div>
<svg style="left:52px;top:1474px" width="14" height="18" viewBox="0 0 14 18"><circle cx="3" cy="2.5" r="2.3" fill="#afb1b3"/><circle cx="3" cy="15.5" r="2.3" fill="#afb1b3"/><circle cx="11" cy="5.5" r="2.3" fill="#afb1b3"/><path d="M3 2.5V15.5M11 5.5Q11 10 3 13" fill="none" stroke="#afb1b3" stroke-width="1.8"/></svg>
<div class="t" style="left:75px;top:1473px;font-size:17px">Version Control</div>
<svg style="left:229px;top:1475px" width="13" height="15" viewBox="0 0 13 15"><path d="M0 0L13 7.5L0 15Z" fill="#afb1b3"/></svg>
<div class="t" style="left:253px;top:1473px;font-size:17px;color:#ffffff">Run</div>
<svg style="left:313px;top:1474px" width="20" height="19" viewBox="0 0 20 19"><path d="M10 0L20 5L10 10L0 5Z" fill="#afb1b3"/><path d="M0 9L10 14L20 9M0 13L10 18L20 13" fill="none" stroke="#afb1b3" stroke-width="1.8"/></svg>
<div class="t" style="left:340px;top:1473px;font-size:17px">Python Packages</div>
<svg style="left:505px;top:1475px" width="16" height="14" viewBox="0 0 16 14"><path d="M0 1.5H3M0 7H3M0 12.5H3M5 1.5H16M5 7H16M5 12.5H16" stroke="#afb1b3" stroke-width="2.2"/></svg>
<div class="t" style="left:528px;top:1473px;font-size:17px">TODO</div>
<svg style="left:608px;top:1474px" width="18" height="18"><use href="#pygrey" width="18" height="18"/></svg>
<div class="t" style="left:634px;top:1473px;font-size:17px">Python Console</div>
<svg style="left:788px;top:1474px" width="16" height="16" viewBox="0 0 16 16"><circle cx="8" cy="8" r="8" fill="#afb1b3"/><path d="M8 3V9.5" stroke="#3c3f41" stroke-width="2.4"/><circle cx="8" cy="12.3" r="1.3" fill="#3c3f41"/></svg>
<div class="t" style="left:813px;top:1473px;font-size:17px">Problems</div>
<svg style="left:915px;top:1474px" width="17" height="16" viewBox="0 0 17 16"><rect x="0" y="0" width="17" height="16" fill="#afb1b3"/><path d="M3 3.5L6.5 7L3 10.5" fill="none" stroke="#3c3f41" stroke-width="1.6"/><path d="M8 12H14" stroke="#3c3f41" stroke-width="1.6"/></svg>
<div class="t" style="left:940px;top:1473px;font-size:17px">Terminal</div>
<svg style="left:1036px;top:1474px" width="20" height="18" viewBox="0 0 20 18"><path d="M5 0H15L20 9L15 18H5L0 9Z" fill="#afb1b3"/><path d="M7.5 4.5L14 9L7.5 13.5Z" fill="#3c3f41"/></svg>
<div class="t" style="left:1063px;top:1473px;font-size:16.2px">Services</div>

<!-- status -->
<svg style="left:9px;top:1505px" width="18" height="18" viewBox="0 0 18 18"><path d="M4.5 0.75H17.25V13.5H4.5Z" fill="none" stroke="#afb1b3" stroke-width="1.5"/><path d="M0.75 4.5V17.25H13.5" fill="none" stroke="#afb1b3" stroke-width="1.5"/></svg>
<div class="t" style="left:42px;top:1502px">Packages installed successfully: Installed packages: 'pyDes' (3 minutes ago)</div>
<div class="t" style="left:1986px;top:1502px">6:1</div>
<div class="t" style="left:2030px;top:1503px;font-size:17.5px">CRLF</div>
<div class="t" style="left:2091px;top:1502px">UTF-8</div>
<div class="t" style="left:2161px;top:1502px">4 spaces</div>
<div class="t" style="left:2253px;top:1502px;font-size:19.5px">Python 3.11 (pythonProject2)</div>
<svg style="left:2523px;top:1505px" width="18" height="16" viewBox="0 0 18 16"><path d="M2 7V4.5Q2 1 5 1Q8 1 8 4.5" fill="none" stroke="#afb1b3" stroke-width="1.8"/><rect x="5" y="7" width="13" height="9" fill="#afb1b3"/></svg>


<!-- IME toolbar -->
<div class="a" style="left:1745px;top:941px;width:256px;height:39px;background:#ffffff;border:1px solid #c9d3dc;border-radius:4px"></div>
<div class="a" style="left:1962px;top:942px;width:38px;height:37px;border-radius:0 3px 3px 0;background:radial-gradient(circle at 20% 20%,#fff7d6 0%,rgba(255,255,255,0) 45%),radial-gradient(circle at 15% 85%,#d9f4fb 0%,rgba(255,255,255,0) 50%),radial-gradient(circle at 90% 60%,#fbe3f6 0%,rgba(255,255,255,0) 50%),#ffffff"></div>
<svg style="left:1728px;top:931px" width="56" height="53" viewBox="0 0 56 53"><defs><linearGradient id="sg" x1="0" y1="0" x2="1" y2="1"><stop offset="0" stop-color="#f98048"/><stop offset="1" stop-color="#ee4a0c"/></linearGradient></defs><g transform="rotate(-17 28 26.5)"><rect x="8" y="6.5" width="40" height="40" rx="5" fill="url(#sg)"/><path d="M39 14.5Q31 12 22 14Q13 16.5 15 23Q16.5 27.5 27 27.5Q35 27.5 35 31Q34.5 35.5 24 35.5Q18 35.5 15 34.5L17 39.5Q22 41 29 40Q42 38.5 41.5 30.5Q41 24 29 23.5Q21.5 23.5 21.5 21Q22 18 30 18.5Q35 19 37.5 20Z" fill="#ffffff"/></g></svg>
<div class="a" style="left:1789px;top:946px;font-size:21px;font-weight:bold;color:#0a6cd8;line-height:26px">英</div>
<svg style="left:1828px;top:953px" width="19" height="17" viewBox="0 0 19 17"><circle cx="4" cy="4" r="3" fill="#0a6cd8"/><path d="M14 5Q18.5 5 18 9Q17.5 13.5 12 16Q15 12 13.5 11Q11 10.5 11 8Q11 5 14 5Z" fill="#0a6cd8"/></svg>
<svg style="left:1864px;top:948px" width="18" height="24" viewBox="0 0 18 24"><rect x="5" y="0" width="8" height="15" rx="4" fill="#0a6cd8"/><path d="M1.5 10Q1.5 18 9 18Q16.5 18 16.5 10" fill="none" stroke="#0a6cd8" stroke-width="2.2"/><path d="M9 18V22M5.5 22.5H12.5" stroke="#0a6cd8" stroke-width="2.2"/></svg>
<svg style="left:1898px;top:952px" width="23" height="18" viewBox="0 0 23 18"><rect x="1" y="1" width="21" height="16" rx="2.5" fill="none" stroke="#0a6cd8" stroke-width="2"/><path d="M4 5.5H19M4 9.5H19" stroke="#0a6cd8" stroke-width="2.4" stroke-dasharray="2.4 1.4"/><path d="M6 13.5H17" stroke="#0a6cd8" stroke-width="2.4"/></svg>
<svg style="left:1934px;top:950px" width="23" height="21" viewBox="0 0 23 21"><path d="M7 0.5Q11.5 3.5 16 0.5L22.5 3.5L22 10L18.5 9.5V19Q18.5 20.5 17 20.5H6Q4.5 20.5 4.5 19V9.5L1 10L0.5 3.5Z" fill="#0a6cd8"/></svg>
<svg style="left:1971px;top:951px" width="20" height="20" viewBox="0 0 20 20"><defs><linearGradient id="gg" x1="0" y1="0" x2="1" y2="1"><stop offset="0" stop-color="#8b6cf0"/><stop offset="0.5" stop-color="#6a6cf0"/><stop offset="1" stop-color="#3f6ee8"/></linearGradient><linearGradient id="gg2" x1="0" y1="0" x2="1" y2="1"><stop offset="0" stop-color="#7a6de8"/><stop offset="1" stop-color="#c46aa0"/></linearGradient></defs><rect x="0" y="0" width="9" height="9" rx="3" fill="url(#gg)"/><rect x="11" y="0" width="9" height="9" rx="1.5" fill="#4a6cf0"/><rect x="13.7" y="2.7" width="3.6" height="3.6" fill="#fff"/><rect x="0" y="11" width="9" height="9" rx="3" fill="url(#gg2)"/><rect x="11" y="11" width="9" height="9" rx="1.5" fill="#4a6cf0"/></svg>

</body></html>
